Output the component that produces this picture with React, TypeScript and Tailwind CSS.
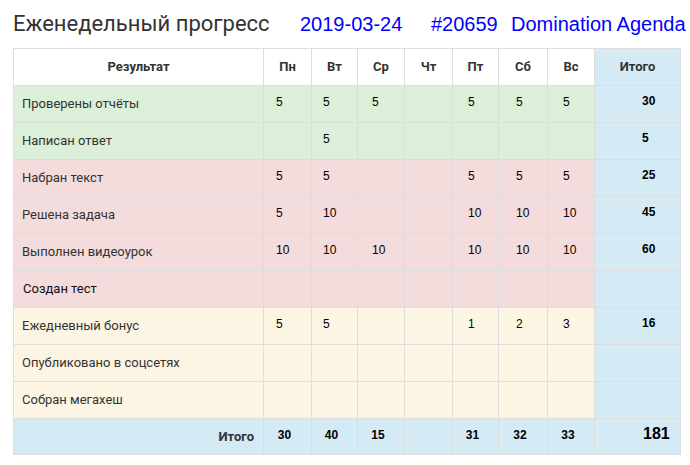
import React from "react";

type Row = { label: string; vals: string[]; total: string; bg: string; dark?: boolean };

const rows: Row[] = [
  { label: "Проверены отчёты", vals: ["5", "5", "5", "", "5", "5", "5"], total: "30", bg: "bg-[#dcefd8]" },
  { label: "Написан ответ", vals: ["", "5", "", "", "", "", ""], total: "5", bg: "bg-[#dcefd8]" },
  { label: "Набран текст", vals: ["5", "5", "", "", "5", "5", "5"], total: "25", bg: "bg-[#f4dbdc]" },
  { label: "Решена задача", vals: ["5", "10", "", "", "10", "10", "10"], total: "45", bg: "bg-[#f4dbdc]" },
  { label: "Выполнен видеоурок", vals: ["10", "10", "10", "", "10", "10", "10"], total: "60", bg: "bg-[#f4dbdc]" },
  { label: "Создан тест", vals: ["", "", "", "", "", "", ""], total: "", bg: "bg-[#f4dbdc]", dark: true },
  { label: "Ежедневный бонус", vals: ["5", "5", "", "", "1", "2", "3"], total: "16", bg: "bg-[#fdf5e3]" },
  { label: "Опубликовано в соцсетях", vals: ["", "", "", "", "", "", ""], total: "", bg: "bg-[#fdf5e3]" },
  { label: "Собран мегахеш", vals: ["", "", "", "", "", "", ""], total: "", bg: "bg-[#fdf5e3]" },
];

const days = ["Пн", "Вт", "Ср", "Чт", "Пт", "Сб", "Вс"];
const numPad = ["pl-[12px]", "pl-[11px]", "pl-[14px]", "pl-[14px]", "pl-[15px]", "pl-[17px]", "pl-[15px]"];
const footer = ["30", "40", "15", "", "31", "32", "33"];

const cell = "border-r border-b border-[#dddddd] h-[37px]";
const sans = "font-['Roboto','Noto_Sans',sans-serif]";
const arial = "font-['Liberation_Sans',Arial,sans-serif]";

export default function App() {
  return (
    <div className="w-[690px] h-[465px] bg-white">
      <div className={`h-[48px] flex items-baseline pt-[9px] leading-[30px] whitespace-nowrap`}>
        <span className={`w-[300px] shrink-0 pl-[13px] text-[22px] text-[#333333] ${sans}`}>Еженедельный прогресс</span>
        <span className={`w-[131px] shrink-0 text-[20px] text-[#0000ff] ${arial}`}>2019-03-24</span>
        <span className={`w-[80px] shrink-0 text-[20px] text-[#0000ff] ${arial}`}>#20659</span>
        <span className={`shrink-0 text-[20px] text-[#0000ff] ${arial}`}>Domination Agenda</span>
      </div>
      <div className="ml-[13px] w-[668px] border-l border-t border-[#dddddd] grid grid-cols-[250px_48px_46px_47px_48px_46px_49px_47px_86px]">
        <div className={`${cell} bg-white flex items-center justify-center text-[13px] font-bold text-[#333333] ${sans}`}>Результат</div>
        {days.map((d) => (
          <div key={d} className={`${cell} bg-white flex items-center justify-center text-[13px] font-bold text-[#333333] ${sans}`}>{d}</div>
        ))}
        <div className={`${cell} bg-[#d4ebf5] flex items-center justify-center text-[13px] font-bold text-[#333333] ${sans}`}>Итого</div>

        {rows.map((r) => (
          <React.Fragment key={r.label}>
            <div className={`${cell} ${r.bg} flex items-center text-[13px] ${r.dark ? "text-[#111111] pl-[9px]" : "text-[#333333] pl-[8px]"} ${sans}`}>{r.label}</div>
            {r.vals.map((v, i) => (
              <div key={i} className={`${cell} ${r.bg} flex items-center pb-[5px] ${numPad[i]} text-[12px] text-black ${arial}`}>{v}</div>
            ))}
            <div className={`${cell} bg-[#d4ebf5] flex items-center pb-[6px] pl-[47px] text-[12px] font-bold text-black ${arial}`}>{r.total}</div>
          </React.Fragment>
        ))}

        <div className={`border-r border-b border-[#dddddd] h-[36px] bg-[#d4ebf5] flex items-center justify-end pr-[9px] pt-[1px] text-[13px] font-bold text-[#333333] ${sans}`}>Итого</div>
        {footer.map((v, i) => (
          <div key={i} className={`border-r border-b border-[#dddddd] h-[36px] bg-[#d4ebf5] flex items-center justify-center pr-[6px] pb-[3px] text-[12px] font-bold text-black ${arial}`}>{v}</div>
        ))}
        <div className={`border-r border-b border-[#dddddd] h-[36px] bg-[#d4ebf5] flex items-center pl-[48px] pb-[5px] text-[16px] font-bold text-black ${arial}`}>181</div>
      </div>
    </div>
  );
}
